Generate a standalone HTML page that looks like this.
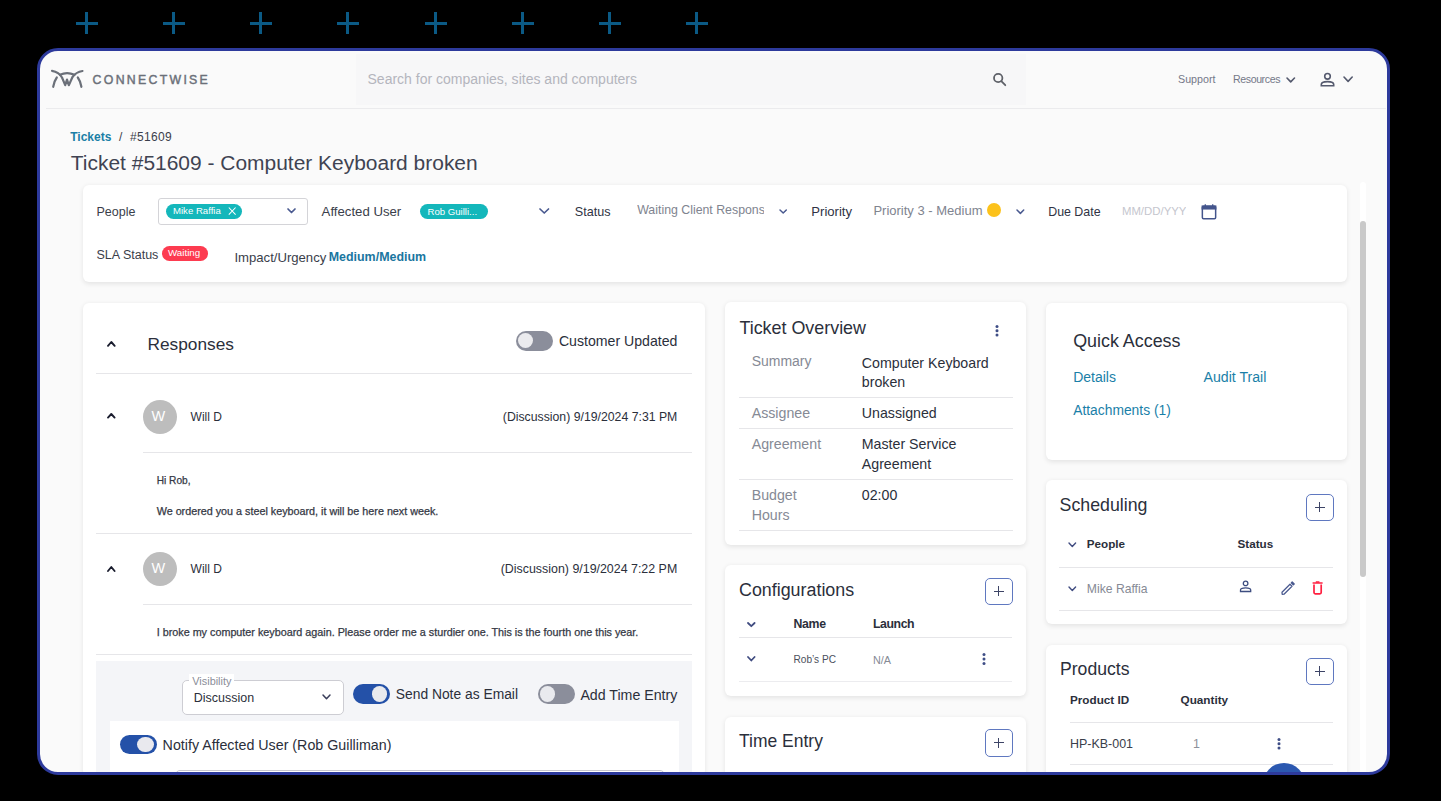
<!DOCTYPE html>
<html><head><meta charset="utf-8"><style>
html,body{margin:0;padding:0;background:#000;width:1441px;height:801px;overflow:hidden}
body{position:relative;font-family:"Liberation Sans",sans-serif}
.a{position:absolute}
.t{position:absolute;line-height:1;white-space:nowrap}
#frame{left:37px;top:48px;width:1353px;height:727px;box-sizing:border-box;border:3px solid #2d3a9c;border-radius:21px;background:#fafafa;overflow:hidden}
</style></head><body>
<div class="a" style="left:76px;top:21.5px;width:22px;height:3.0px;background:#0b5a85"></div>
<div class="a" style="left:85px;top:12px;width:3px;height:22px;background:#0b5a85"></div>
<div class="a" style="left:163px;top:21.5px;width:22px;height:3.0px;background:#0b5a85"></div>
<div class="a" style="left:172px;top:12px;width:3px;height:22px;background:#0b5a85"></div>
<div class="a" style="left:250px;top:21.5px;width:22px;height:3.0px;background:#0b5a85"></div>
<div class="a" style="left:259px;top:12px;width:3px;height:22px;background:#0b5a85"></div>
<div class="a" style="left:337px;top:21.5px;width:22px;height:3.0px;background:#0b5a85"></div>
<div class="a" style="left:346px;top:12px;width:3px;height:22px;background:#0b5a85"></div>
<div class="a" style="left:425px;top:21.5px;width:22px;height:3.0px;background:#0b5a85"></div>
<div class="a" style="left:434px;top:12px;width:3px;height:22px;background:#0b5a85"></div>
<div class="a" style="left:512px;top:21.5px;width:22px;height:3.0px;background:#0b5a85"></div>
<div class="a" style="left:521px;top:12px;width:3px;height:22px;background:#0b5a85"></div>
<div class="a" style="left:599px;top:21.5px;width:22px;height:3.0px;background:#0b5a85"></div>
<div class="a" style="left:608px;top:12px;width:3px;height:22px;background:#0b5a85"></div>
<div class="a" style="left:686px;top:21.5px;width:22px;height:3.0px;background:#0b5a85"></div>
<div class="a" style="left:695px;top:12px;width:3px;height:22px;background:#0b5a85"></div>
<div class="a" id="frame"><div class="a" style="left:-40px;top:-51px"><div class="a" style="left:356px;top:53.5px;width:670px;height:51.5px;background:#f7f7f8"></div>
<div class="a" style="left:46px;top:108px;width:1340px;height:1px;background:#ebebed"></div>
<svg class="a" style="left:46px;top:62px" width="50" height="32" viewBox="0 0 50 32" fill="none" stroke="#6b7079" stroke-width="2.2" stroke-linecap="round" stroke-linejoin="round">
<path d="M6 8.8 Q13 10 16 15.5 L19.2 23.2 L21 17.6 L22.8 23.2 L26.5 15 Q30 10 36.5 9"/>
<path d="M14 12.8 Q21 9.5 28.5 12.8"/>
<path d="M10.8 15.5 Q8.2 19 7.2 24.8"/>
<path d="M31.8 15.5 Q34.4 19 35.4 24.8"/>
</svg>
<div class="t" style="left:92.6px;top:74.39px;font-size:12.3px;color:#6b7079;font-weight:400;letter-spacing:2.3px;-webkit-text-stroke:0.45px #6b7079">CONNECTWISE</div>
<div class="t" style="left:367.5px;top:71.83px;font-size:14.02px;color:#b4b5bd;font-weight:400;">Search for companies, sites and computers</div>
<svg class="a" style="left:990px;top:70px" width="18" height="18" viewBox="0 0 18 18" fill="none" stroke="#5f6269" stroke-width="1.8" stroke-linecap="round"><circle cx="8.2" cy="8" r="4.2"/><path d="M11.3 11.1 L15.3 15.2"/></svg>
<div class="t" style="left:1178.0px;top:73.94px;font-size:10.7px;color:#747888;font-weight:400;">Support</div>
<div class="t" style="left:1233.0px;top:74.03px;font-size:10.6px;color:#747888;font-weight:400;letter-spacing:-0.4px">Resources</div>
<svg class="a" style="left:1284.30px;top:74.60px" width="13.50" height="9.90" viewBox="1284.30 74.60 13.50 9.90" fill="none" stroke="#555a6e" stroke-width="1.6" stroke-linecap="round" stroke-linejoin="round"><path d="M1287.30 77.60 L1291.00 81.50 L1294.80 77.60"/></svg>
<svg class="a" style="left:1319px;top:72px" width="17" height="16" viewBox="0 0 17 16" fill="none" stroke="#555a6e" stroke-width="1.6"><circle cx="8.5" cy="4.3" r="2.8"/><path d="M2.3 13.8 V12.4 Q2.3 9.6 8.5 9.6 Q14.7 9.6 14.7 12.4 V13.8 Z"/></svg>
<svg class="a" style="left:1340.50px;top:74.40px" width="14.20" height="10.40" viewBox="1340.50 74.40 14.20 10.40" fill="none" stroke="#555a6e" stroke-width="1.6" stroke-linecap="round" stroke-linejoin="round"><path d="M1343.50 77.40 L1347.60 81.80 L1351.70 77.40"/></svg>
<div class="t" style="left:70.2px;top:131.44px;font-size:12px;color:#1b7fa6;font-weight:700;">Tickets</div>
<div class="t" style="left:119.0px;top:131.44px;font-size:12px;color:#3a3e4a;font-weight:400;">/</div>
<div class="t" style="left:130.0px;top:131.44px;font-size:12px;color:#3a3e4a;font-weight:400;letter-spacing:0.35px">#51609</div>
<div class="t" style="left:70.8px;top:152.66px;font-size:20.96px;color:#3f4352;font-weight:400;">Ticket #51609 - Computer Keyboard broken</div>
<div class="a" style="left:1360.3px;top:182px;width:6.0px;height:608px;background:#fff;border-radius:3px"></div>
<div class="a" style="left:1360.3px;top:221px;width:6.0px;height:356px;background:#c9c9c9;border-radius:3px"></div>
<div class="a" style="left:83px;top:185px;width:1263.5px;height:97px;background:#fff;border-radius:6px;box-shadow:0 1.5px 5px rgba(0,0,0,0.09)"></div>
<div class="t" style="left:96.5px;top:205.82px;font-size:12.5px;color:#3a3e4a;font-weight:400;">People</div>
<div class="a" style="left:158px;top:198px;width:150px;height:26.5px;border:1px solid #d4d4d8;border-radius:3px;box-sizing:border-box;background:#fff"></div>
<div class="a" style="left:165.5px;top:203.5px;width:76.5px;height:15.0px;background:#14b7bb;border-radius:8px"></div>
<div class="t" style="left:173.0px;top:206.37px;font-size:9.6px;color:#fff;font-weight:400;">Mike Raffia</div>
<svg class="a" style="left:227px;top:206px" width="10" height="10" viewBox="0 0 10 10" stroke="#fff" stroke-width="1.05"><path d="M1.8 1.5 L8.6 8.6 M8.6 1.5 L1.8 8.6"/></svg>
<svg class="a" style="left:285.00px;top:206.20px" width="13.00" height="9.50" viewBox="285.00 206.20 13.00 9.50" fill="none" stroke="#4a5a90" stroke-width="1.7" stroke-linecap="round" stroke-linejoin="round"><path d="M288.00 209.20 L291.50 212.70 L295.00 209.20"/></svg>
<div class="t" style="left:321.6px;top:204.73px;font-size:13.2px;color:#3a3e4a;font-weight:400;">Affected User</div>
<div class="a" style="left:420px;top:203.5px;width:68px;height:15.0px;background:#14b7bb;border-radius:8px"></div>
<div class="t" style="left:427.5px;top:206.87px;font-size:9.6px;color:#fff;font-weight:400;">Rob Guilli...</div>
<svg class="a" style="left:537.00px;top:206.00px" width="14.50" height="10.00" viewBox="537.00 206.00 14.50 10.00" fill="none" stroke="#4a5a90" stroke-width="1.7" stroke-linecap="round" stroke-linejoin="round"><path d="M540.00 209.00 L544.25 213.00 L548.50 209.00"/></svg>
<div class="t" style="left:574.8px;top:205.53px;font-size:12.6px;color:#2f3344;font-weight:400;">Status</div>
<div class="t" style="left:637.2px;top:204.36px;font-size:12.33px;color:#80848f;font-weight:400;width:127px;overflow:hidden;white-space:nowrap">Waiting Client Respons</div>
<svg class="a" style="left:777.30px;top:207.00px" width="12.30" height="9.00" viewBox="777.30 207.00 12.30 9.00" fill="none" stroke="#4a5a90" stroke-width="1.5" stroke-linecap="round" stroke-linejoin="round"><path d="M780.30 210.00 L783.50 213.00 L786.60 210.00"/></svg>
<div class="t" style="left:811.3px;top:205.11px;font-size:13.1px;color:#2f3344;font-weight:400;">Priority</div>
<div class="t" style="left:873.4px;top:204.00px;font-size:13.0px;color:#80848f;font-weight:400;">Priority 3 - Medium</div>
<div class="a" style="left:987px;top:203px;width:14px;height:14px;background:#fcc21b;border-radius:50%"></div>
<svg class="a" style="left:1013.80px;top:206.80px" width="12.70" height="9.40" viewBox="1013.80 206.80 12.70 9.40" fill="none" stroke="#4a5a90" stroke-width="1.5" stroke-linecap="round" stroke-linejoin="round"><path d="M1016.80 209.80 L1020.20 213.20 L1023.50 209.80"/></svg>
<div class="t" style="left:1048.2px;top:205.80px;font-size:12.4px;color:#2f3344;font-weight:400;">Due Date</div>
<div class="t" style="left:1121.9px;top:205.85px;font-size:11.4px;color:#c5c6ce;font-weight:400;width:64px;overflow:hidden;white-space:nowrap">MM/DD/YYY</div>
<svg class="a" style="left:1201px;top:203px" width="16" height="17" viewBox="0 0 16 17" fill="none" stroke="#44558c" stroke-width="1.5"><rect x="1.35" y="3.2" width="13.3" height="12.6" rx="1.2"/><rect x="1.35" y="3.2" width="13.3" height="2.6" fill="#44558c"/><path d="M4.3 1.2 V3.2 M11.7 1.2 V3.2" stroke-width="1.3"/></svg>
<div class="t" style="left:96.5px;top:248.72px;font-size:12.5px;color:#3a3e4a;font-weight:400;">SLA Status</div>
<div class="a" style="left:161.5px;top:246px;width:46.30000000000001px;height:15px;background:#fd3b50;border-radius:8px"></div>
<div class="t" style="left:168.0px;top:248.35px;font-size:9.75px;color:#fff;font-weight:400;">Waiting</div>
<div class="t" style="left:234.4px;top:251.18px;font-size:13.14px;color:#3a3e4a;font-weight:400;">Impact/Urgency</div>
<div class="t" style="left:328.7px;top:251.46px;font-size:12.45px;color:#1a76a0;font-weight:700;">Medium/Medium</div>
<div class="a" style="left:83px;top:302.5px;width:622px;height:473.5px;background:#fff;border-radius:6px;box-shadow:0 1.5px 5px rgba(0,0,0,0.09)"></div>
<svg class="a" style="left:105.30px;top:339.30px" width="12.70" height="9.80" viewBox="105.30 339.30 12.70 9.80" fill="none" stroke="#1a1d2e" stroke-width="1.9" stroke-linecap="round" stroke-linejoin="round"><path d="M108.30 346.10 L111.60 342.30 L115.00 346.10"/></svg>
<div class="t" style="left:147.5px;top:336.36px;font-size:17.3px;color:#2b2f3b;font-weight:400;">Responses</div>
<div class="a" style="left:515.5px;top:330.5px;width:37.5px;height:20.5px;background:#8b8e9b;border-radius:10px"></div>
<div class="a" style="left:517.5px;top:333.2px;width:15.0px;height:15.0px;background:#ebebee;border-radius:50%"></div>
<div class="t" style="left:558.9px;top:334.44px;font-size:14.13px;color:#2b2f3b;font-weight:400;">Customer Updated</div>
<div class="a" style="left:96px;top:373px;width:596px;height:1px;background:#e6e6e9"></div>
<svg class="a" style="left:105.40px;top:411.40px" width="12.60" height="9.60" viewBox="105.40 411.40 12.60 9.60" fill="none" stroke="#1a1d2e" stroke-width="1.9" stroke-linecap="round" stroke-linejoin="round"><path d="M108.40 418.00 L111.70 414.40 L115.00 418.00"/></svg>
<div class="a" style="left:143px;top:399.5px;width:34px;height:34.0px;background:#bdbdbd;border-radius:50%"></div>
<div class="t" style="left:151.5px;top:408.93px;font-size:14.5px;color:#fff;font-weight:400;">W</div>
<div class="t" style="left:190.6px;top:410.74px;font-size:12px;color:#2b2f3b;font-weight:400;">Will D</div>
<div class="t" style="left:502.8px;top:410.80px;font-size:12.28px;color:#2b2f3b;font-weight:400;">(Discussion) 9/19/2024 7:31 PM</div>
<div class="a" style="left:143px;top:451.5px;width:549px;height:1.0px;background:#e6e6e9"></div>
<div class="t" style="left:156.7px;top:475.69px;font-size:10.17px;color:#343844;font-weight:400;-webkit-text-stroke:0.25px #343844">Hi Rob,</div>
<div class="t" style="left:156.7px;top:505.97px;font-size:10.78px;color:#343844;font-weight:400;-webkit-text-stroke:0.25px #343844">We ordered you a steel keyboard, it will be here next week.</div>
<div class="a" style="left:96px;top:532.5px;width:596px;height:1.0px;background:#e6e6e9"></div>
<svg class="a" style="left:105.40px;top:563.60px" width="12.60" height="10.00" viewBox="105.40 563.60 12.60 10.00" fill="none" stroke="#1a1d2e" stroke-width="1.9" stroke-linecap="round" stroke-linejoin="round"><path d="M108.40 570.60 L111.70 566.60 L115.00 570.60"/></svg>
<div class="a" style="left:143px;top:551.5px;width:34px;height:34.0px;background:#bdbdbd;border-radius:50%"></div>
<div class="t" style="left:151.5px;top:560.93px;font-size:14.5px;color:#fff;font-weight:400;">W</div>
<div class="t" style="left:190.6px;top:562.74px;font-size:12px;color:#2b2f3b;font-weight:400;">Will D</div>
<div class="t" style="left:500.7px;top:563.19px;font-size:12.42px;color:#2b2f3b;font-weight:400;">(Discussion) 9/19/2024 7:22 PM</div>
<div class="a" style="left:143px;top:603.5px;width:549px;height:1.0px;background:#e6e6e9"></div>
<div class="t" style="left:156.7px;top:627.07px;font-size:10.79px;color:#343844;font-weight:400;-webkit-text-stroke:0.25px #343844">I broke my computer keyboard again. Please order me a sturdier one. This is the fourth one this year.</div>
<div class="a" style="left:96px;top:654px;width:596px;height:1px;background:#e6e6e9"></div>
<div class="a" style="left:96px;top:661.2px;width:596px;height:114.79999999999995px;background:#f4f5f8"></div>
<div class="a" style="left:182px;top:680px;width:162px;height:35px;border:1px solid #cdcdd3;border-radius:5px;box-sizing:border-box;background:#fff"></div>
<div class="a" style="left:189px;top:673.5px;width:45px;height:8.5px;background:#fff"></div>
<div class="t" style="left:192.3px;top:676.47px;font-size:10.9px;color:#8a8d98;font-weight:400;">Visibility</div>
<div class="t" style="left:193.8px;top:691.54px;font-size:12.47px;color:#2b2f3b;font-weight:400;">Discussion</div>
<svg class="a" style="left:320.00px;top:692.00px" width="13.00" height="9.80" viewBox="320.00 692.00 13.00 9.80" fill="none" stroke="#3a3e5a" stroke-width="1.5" stroke-linecap="round" stroke-linejoin="round"><path d="M323.00 695.00 L326.50 698.80 L330.00 695.00"/></svg>
<div class="a" style="left:353px;top:684px;width:37.19999999999999px;height:20px;background:#2451a8;border-radius:10px"></div>
<div class="a" style="left:371.6px;top:686.2px;width:15.799999999999955px;height:15.799999999999955px;background:#e9eaee;border-radius:50%"></div>
<div class="t" style="left:395.8px;top:688.29px;font-size:13.83px;color:#2b2f3b;font-weight:400;">Send Note as Email</div>
<div class="a" style="left:537.7px;top:684px;width:37.0px;height:20px;background:#8b8e9b;border-radius:10px"></div>
<div class="a" style="left:539.5px;top:686.2px;width:15.5px;height:15.799999999999955px;background:#e9eaee;border-radius:50%"></div>
<div class="t" style="left:580.4px;top:687.98px;font-size:14.2px;color:#2b2f3b;font-weight:400;">Add Time Entry</div>
<div class="a" style="left:109.5px;top:721px;width:569.0px;height:55px;background:#fff"></div>
<div class="a" style="left:119.5px;top:735px;width:37.0px;height:18.5px;background:#2451a8;border-radius:10px"></div>
<div class="a" style="left:137px;top:736.5px;width:16.5px;height:15.5px;background:#e9e9ee;border-radius:50%"></div>
<div class="t" style="left:162.6px;top:738.21px;font-size:14.28px;color:#2b2f3b;font-weight:400;">Notify Affected User (Rob Guilliman)</div>
<div class="a" style="left:174.5px;top:770px;width:490.5px;height:20px;border:1px solid #c8c8cf;border-radius:5px;box-sizing:border-box"></div>
<div class="a" style="left:724.8px;top:302px;width:301.20000000000005px;height:242.5px;background:#fff;border-radius:6px;box-shadow:0 1.5px 5px rgba(0,0,0,0.09)"></div>
<div class="t" style="left:739.4px;top:319.85px;font-size:17.9px;color:#2b2f3b;font-weight:400;">Ticket Overview</div>
<svg class="a" style="left:992.80px;top:323.20px" width="8" height="15.40" viewBox="992.80 323.20 8 15.40" fill="#3f4e86"><circle cx="996.80" cy="326.70" r="1.5"/><circle cx="996.80" cy="330.90" r="1.5"/><circle cx="996.80" cy="335.10" r="1.5"/></svg>
<div class="t" style="left:751.7px;top:355.37px;font-size:13.97px;color:#868a95;font-weight:400;">Summary</div>
<div class="t" style="left:861.8px;top:355.99px;font-size:14.19px;color:#2b2f3b;font-weight:400;">Computer Keyboard</div>
<div class="t" style="left:861.8px;top:375.49px;font-size:14.19px;color:#2b2f3b;font-weight:400;">broken</div>
<div class="a" style="left:738.7px;top:397px;width:274.0px;height:1px;background:#e6e6e9"></div>
<div class="t" style="left:751.7px;top:406.38px;font-size:14.2px;color:#868a95;font-weight:400;">Assignee</div>
<div class="t" style="left:861.8px;top:406.39px;font-size:14.19px;color:#2b2f3b;font-weight:400;">Unassigned</div>
<div class="a" style="left:738.7px;top:428px;width:274.0px;height:1px;background:#e6e6e9"></div>
<div class="t" style="left:751.7px;top:437.18px;font-size:14.2px;color:#868a95;font-weight:400;">Agreement</div>
<div class="t" style="left:861.8px;top:437.19px;font-size:14.19px;color:#2b2f3b;font-weight:400;">Master Service</div>
<div class="t" style="left:861.8px;top:457.29px;font-size:14.19px;color:#2b2f3b;font-weight:400;">Agreement</div>
<div class="a" style="left:738.7px;top:479px;width:274.0px;height:1px;background:#e6e6e9"></div>
<div class="t" style="left:751.7px;top:488.18px;font-size:14.2px;color:#868a95;font-weight:400;">Budget</div>
<div class="t" style="left:751.7px;top:507.98px;font-size:14.2px;color:#868a95;font-weight:400;">Hours</div>
<div class="t" style="left:861.8px;top:488.19px;font-size:14.19px;color:#2b2f3b;font-weight:400;">02:00</div>
<div class="a" style="left:738.7px;top:530px;width:274.0px;height:1px;background:#e6e6e9"></div>
<div class="a" style="left:724.8px;top:564.5px;width:301.20000000000005px;height:131.0px;background:#fff;border-radius:6px;box-shadow:0 1.5px 5px rgba(0,0,0,0.09)"></div>
<div class="t" style="left:739.0px;top:581.66px;font-size:17.88px;color:#2b2f3b;font-weight:400;">Configurations</div>
<div class="a" style="left:985px;top:577.5px;width:27.5px;height:27.5px;border:1.3px solid #5f78c0;border-radius:5px;box-sizing:border-box"></div>
<div class="a" style="left:993.55px;top:590.6px;width:10.400000000000091px;height:1.2999999999999545px;background:#3d4466"></div>
<div class="a" style="left:998.1px;top:586.05px;width:1.2999999999999545px;height:10.400000000000091px;background:#3d4466"></div>
<svg class="a" style="left:745.00px;top:619.50px" width="12.60" height="9.20" viewBox="745.00 619.50 12.60 9.20" fill="none" stroke="#404c80" stroke-width="1.8" stroke-linecap="round" stroke-linejoin="round"><path d="M748.00 622.50 L751.30 625.70 L754.60 622.50"/></svg>
<div class="t" style="left:793.5px;top:617.59px;font-size:12.3px;color:#2b2f3b;font-weight:700;letter-spacing:-0.3px">Name</div>
<div class="t" style="left:872.9px;top:617.59px;font-size:12.3px;color:#2b2f3b;font-weight:700;letter-spacing:-0.4px">Launch</div>
<div class="a" style="left:739px;top:637px;width:273px;height:1px;background:#e6e6e9"></div>
<svg class="a" style="left:745.00px;top:654.30px" width="12.60" height="9.50" viewBox="745.00 654.30 12.60 9.50" fill="none" stroke="#404c80" stroke-width="1.8" stroke-linecap="round" stroke-linejoin="round"><path d="M748.00 657.30 L751.30 660.80 L754.60 657.30"/></svg>
<div class="t" style="left:793.5px;top:655.35px;font-size:10.1px;color:#4b4f5c;font-weight:400;">Rob’s PC</div>
<div class="t" style="left:872.9px;top:654.76px;font-size:10.8px;color:#868a95;font-weight:400;">N/A</div>
<svg class="a" style="left:979.50px;top:651.40px" width="8" height="16.00" viewBox="979.50 651.40 8 16.00" fill="#3f4e86"><circle cx="983.50" cy="654.90" r="1.5"/><circle cx="983.50" cy="659.40" r="1.5"/><circle cx="983.50" cy="663.90" r="1.5"/></svg>
<div class="a" style="left:739px;top:681px;width:273px;height:1px;background:#ececef"></div>
<div class="a" style="left:724.8px;top:716.5px;width:301.20000000000005px;height:73.5px;background:#fff;border-radius:6px;box-shadow:0 1.5px 5px rgba(0,0,0,0.09)"></div>
<div class="t" style="left:739.0px;top:732.99px;font-size:17.49px;color:#2b2f3b;font-weight:400;">Time Entry</div>
<div class="a" style="left:985px;top:729px;width:27.5px;height:27.5px;border:1.3px solid #5f78c0;border-radius:5px;box-sizing:border-box"></div>
<div class="a" style="left:993.55px;top:742.1px;width:10.400000000000091px;height:1.2999999999999545px;background:#3d4466"></div>
<div class="a" style="left:998.1px;top:737.55px;width:1.2999999999999545px;height:10.400000000000091px;background:#3d4466"></div>
<div class="a" style="left:1046px;top:302.5px;width:301px;height:157.5px;background:#fff;border-radius:6px;box-shadow:0 1.5px 5px rgba(0,0,0,0.09)"></div>
<div class="t" style="left:1073.2px;top:333.16px;font-size:17.89px;color:#2b2f3b;font-weight:400;">Quick Access</div>
<div class="t" style="left:1073.2px;top:369.95px;font-size:14.0px;color:#1a7fa8;font-weight:400;">Details</div>
<div class="t" style="left:1203.5px;top:369.82px;font-size:14.15px;color:#1a7fa8;font-weight:400;">Audit Trail</div>
<div class="t" style="left:1073.2px;top:403.99px;font-size:13.83px;color:#1a7fa8;font-weight:400;">Attachments (1)</div>
<div class="a" style="left:1046px;top:480px;width:301px;height:144px;background:#fff;border-radius:6px;box-shadow:0 1.5px 5px rgba(0,0,0,0.09)"></div>
<div class="t" style="left:1059.6px;top:497.37px;font-size:17.76px;color:#2b2f3b;font-weight:400;">Scheduling</div>
<div class="a" style="left:1306px;top:493.5px;width:27.5px;height:27.5px;border:1.3px solid #5f78c0;border-radius:5px;box-sizing:border-box"></div>
<div class="a" style="left:1314.55px;top:506.6px;width:10.400000000000091px;height:1.2999999999999545px;background:#3d4466"></div>
<div class="a" style="left:1319.1px;top:502.05px;width:1.300000000000182px;height:10.400000000000034px;background:#3d4466"></div>
<svg class="a" style="left:1065.90px;top:540.10px" width="12.60" height="9.50" viewBox="1065.90 540.10 12.60 9.50" fill="none" stroke="#404c80" stroke-width="1.4" stroke-linecap="round" stroke-linejoin="round"><path d="M1068.90 543.10 L1072.20 546.60 L1075.50 543.10"/></svg>
<div class="t" style="left:1086.8px;top:538.30px;font-size:11.7px;color:#2b2f3b;font-weight:700;">People</div>
<div class="t" style="left:1237.5px;top:538.30px;font-size:11.7px;color:#2b2f3b;font-weight:700;">Status</div>
<div class="a" style="left:1059px;top:566.5px;width:274px;height:1.0px;background:#e6e6e9"></div>
<svg class="a" style="left:1065.90px;top:583.60px" width="12.60" height="9.50" viewBox="1065.90 583.60 12.60 9.50" fill="none" stroke="#404c80" stroke-width="1.4" stroke-linecap="round" stroke-linejoin="round"><path d="M1068.90 586.60 L1072.20 590.10 L1075.50 586.60"/></svg>
<div class="t" style="left:1086.8px;top:583.09px;font-size:12.18px;color:#868a95;font-weight:400;">Mike Raffia</div>
<svg class="a" style="left:1238px;top:579px" width="15" height="15" viewBox="0 0 15 15" fill="none" stroke="#3d4d80" stroke-width="1.3"><circle cx="7.6" cy="4.4" r="2.3"/><path d="M2.5 12.5 V11 Q2.5 8.8 7.6 8.8 Q12.7 8.8 12.7 11 V12.5 Z"/></svg>
<svg class="a" style="left:1279px;top:580px" width="17" height="16" viewBox="0 0 17 16" fill="none" stroke="#4a5a90" stroke-width="1.3" stroke-linejoin="round"><path d="M3.2 14.3 L3 12.2 L11 4.2 L13 6.2 L5 14.2 Z"/><path d="M12.3 2.9 L13.2 2 L15.2 4 L14.3 4.9 Z" fill="#4a5a90"/></svg>
<svg class="a" style="left:1311px;top:580px" width="13" height="16" viewBox="0 0 13 16" fill="none" stroke="#ff1f40" stroke-width="1.7"><path d="M1.6 3 H11.6" stroke-width="1.5"/><path d="M4.8 2 H8.4" stroke-width="1.5"/><path d="M3 4.6 V12.6 Q3 13.9 4.3 13.9 H8.9 Q10.2 13.9 10.2 12.6 V4.6"/></svg>
<div class="a" style="left:1059px;top:610px;width:274px;height:1px;background:#e6e6e9"></div>
<div class="a" style="left:1046px;top:644.5px;width:301px;height:145.5px;background:#fff;border-radius:6px;box-shadow:0 1.5px 5px rgba(0,0,0,0.09)"></div>
<div class="t" style="left:1060.0px;top:661.49px;font-size:17.61px;color:#2b2f3b;font-weight:400;">Products</div>
<div class="a" style="left:1306px;top:657.5px;width:27.5px;height:27.5px;border:1.3px solid #5f78c0;border-radius:5px;box-sizing:border-box"></div>
<div class="a" style="left:1314.55px;top:670.6px;width:10.400000000000091px;height:1.2999999999999545px;background:#3d4466"></div>
<div class="a" style="left:1319.1px;top:666.05px;width:1.300000000000182px;height:10.400000000000091px;background:#3d4466"></div>
<div class="t" style="left:1070.0px;top:693.69px;font-size:11.71px;color:#2b2f3b;font-weight:700;">Product ID</div>
<div class="t" style="left:1180.5px;top:693.65px;font-size:11.76px;color:#2b2f3b;font-weight:700;">Quantity</div>
<div class="a" style="left:1070px;top:722px;width:263px;height:1px;background:#e6e6e9"></div>
<div class="t" style="left:1070.0px;top:738.05px;font-size:12.46px;color:#3a3e4a;font-weight:400;">HP-KB-001</div>
<div class="t" style="left:1193.0px;top:738.10px;font-size:12.4px;color:#8d909a;font-weight:400;">1</div>
<svg class="a" style="left:1275.10px;top:736.00px" width="8" height="15.60" viewBox="1275.10 736.00 8 15.60" fill="#3f4e86"><circle cx="1279.10" cy="739.50" r="1.5"/><circle cx="1279.10" cy="743.80" r="1.5"/><circle cx="1279.10" cy="748.10" r="1.5"/></svg>
<div class="a" style="left:1070px;top:764px;width:263px;height:1px;background:#e6e6e9"></div>
<div class="a" style="left:1263px;top:763.4px;width:42px;height:42.0px;background:#2b58b0;border-radius:50%"></div></div></div>
</body></html>
